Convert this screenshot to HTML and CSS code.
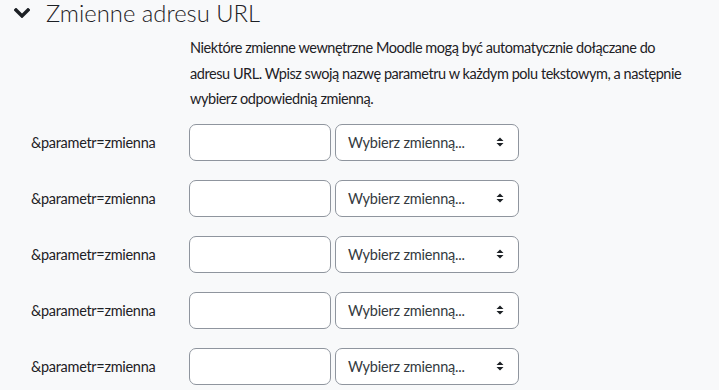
FILE: index.html
```html
<!DOCTYPE html>
<html lang="pl">
<head>
<meta charset="utf-8">
<title>Zmienne adresu URL</title>
<link rel="stylesheet" href="styles.css">
</head>
<body>
<fieldset class="section">
  <div class="legend">
    <svg class="chevron" width="16" height="10" viewBox="0 0 16 10" aria-hidden="true"><polyline points="2,2 8,8 14,2" fill="none" stroke="#1d2125" stroke-width="3.4" stroke-linecap="square"/></svg>
    <h3 class="legend-title">Zmienne adresu URL</h3>
  </div>
  <div class="intro">
    <p class="intro-text">Niektóre zmienne wewnętrzne Moodle mogą być automatycznie dołączane do adresu URL. Wpisz swoją nazwę parametru w każdym polu tekstowym, a następnie wybierz odpowiednią zmienną.</p>
  </div>
  <div class="rows">
    <div class="row"><label class="row-label">&amp;parametr=zmienna</label><div class="controls"><input class="text-input" type="text"><div class="select"><span>Wybierz zmienną...</span><svg class="updown" width="8" height="10" viewBox="0 0 8 10"><path d="M0.5 4 L4 0.5 L7.5 4 Z M0.5 6 L4 9.5 L7.5 6 Z" fill="#1d2125"/></svg></div></div></div>
    <div class="row"><label class="row-label">&amp;parametr=zmienna</label><div class="controls"><input class="text-input" type="text"><div class="select"><span>Wybierz zmienną...</span><svg class="updown" width="8" height="10" viewBox="0 0 8 10"><path d="M0.5 4 L4 0.5 L7.5 4 Z M0.5 6 L4 9.5 L7.5 6 Z" fill="#1d2125"/></svg></div></div></div>
    <div class="row"><label class="row-label">&amp;parametr=zmienna</label><div class="controls"><input class="text-input" type="text"><div class="select"><span>Wybierz zmienną...</span><svg class="updown" width="8" height="10" viewBox="0 0 8 10"><path d="M0.5 4 L4 0.5 L7.5 4 Z M0.5 6 L4 9.5 L7.5 6 Z" fill="#1d2125"/></svg></div></div></div>
    <div class="row"><label class="row-label">&amp;parametr=zmienna</label><div class="controls"><input class="text-input" type="text"><div class="select"><span>Wybierz zmienną...</span><svg class="updown" width="8" height="10" viewBox="0 0 8 10"><path d="M0.5 4 L4 0.5 L7.5 4 Z M0.5 6 L4 9.5 L7.5 6 Z" fill="#1d2125"/></svg></div></div></div>
    <div class="row"><label class="row-label">&amp;parametr=zmienna</label><div class="controls"><input class="text-input" type="text"><div class="select"><span>Wybierz zmienną...</span><svg class="updown" width="8" height="10" viewBox="0 0 8 10"><path d="M0.5 4 L4 0.5 L7.5 4 Z M0.5 6 L4 9.5 L7.5 6 Z" fill="#1d2125"/></svg></div></div></div>
  </div>
</fieldset>
</body>
</html>
```

FILE: styles.css
```css
html, body {
  margin: 0;
  padding: 0;
  background: #f8f9fa;
}
body {
  font-family: Lato, "Open Sans", sans-serif;
  color: #1d2125;
  font-size: 14.5px;
}
.section {
  border: 0;
  margin: 0;
  padding: 0;
}
.legend {
  display: flex;
  align-items: center;
  height: 30px;
  padding-left: 14px;
}
.chevron {
  display: block;
  margin-top: -4px;
}
.legend-title {
  margin: 0 0 0 16px;
  font-weight: 300;
  font-size: 23.8px;
  line-height: 30px;
  margin-top: -4px;
}
.intro {
  padding-left: 190px;
  padding-top: 5px;
}
.intro-text {
  margin: 0;
  width: 500px;
  line-height: 25.5px;
  letter-spacing: -0.45px;
}
.rows {
  display: flex;
  flex-direction: column;
  gap: 19px;
  margin-top: 12px;
}
.row {
  display: grid;
  grid-template-columns: 189px auto;
  align-items: center;
}
.row-label {
  padding-left: 31px;
  letter-spacing: -0.3px;
}
.controls {
  display: flex;
  gap: 4px;
}
.text-input {
  box-sizing: border-box;
  width: 142px;
  height: 37px;
  border: 1px solid #8f959e;
  border-radius: 7px;
  background: #fff;
  margin: 0;
}
.select {
  box-sizing: border-box;
  width: 184px;
  height: 37px;
  border: 1px solid #8f959e;
  border-radius: 7px;
  background: #fff;
  display: flex;
  align-items: center;
  justify-content: space-between;
  padding: 0 14px 0 12px;
  color: #343a40;
  letter-spacing: -0.2px;
}
.updown {
  display: block;
}
```
